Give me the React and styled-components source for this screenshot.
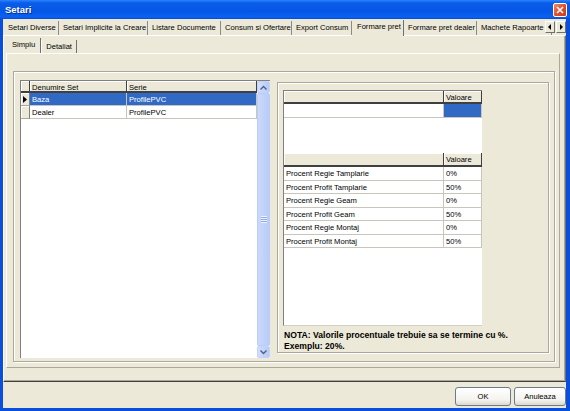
import React from 'react';
import styled, { createGlobalStyle } from 'styled-components';

const Global = createGlobalStyle`
  html, body { margin: 0; padding: 0; background: #0a4fdc; }
  * { box-sizing: border-box; }
`;

const Window = styled.div`
  width: 570px;
  height: 411px;
  display: flex;
  flex-direction: column;
  background: #0a4fdc;
  font-family: "Liberation Sans", Arial, sans-serif;
  font-size: 7.6px;
  color: #000;
  overflow: hidden;
`;

const TitleBar = styled.div`
  height: 19px;
  display: flex;
  align-items: center;
  justify-content: space-between;
  padding: 0 3px 0 5px;
  background: linear-gradient(to bottom, #2a84ff 0%, #0a5de8 15%, #0656e6 60%, #0a62f2 90%, #0848d6 100%);
`;

const Title = styled.span`
  color: #fff;
  font-weight: bold;
  font-size: 9.5px;
  text-shadow: 1px 1px 0 #0a2f8a;
`;

const CloseBtn = styled.div`
  width: 14px;
  height: 14px;
  border: 1px solid #fff;
  border-radius: 2px;
  background: linear-gradient(135deg, #f08a6a 0%, #e0502b 50%, #c83a18 100%);
  display: flex;
  align-items: center;
  justify-content: center;
`;

const Frame = styled.div`
  flex: 1;
  margin: 0 4px 3px 3px;
  background: #ece9d8;
  display: flex;
  flex-direction: column;
`;

const TabStrip = styled.div`
  height: 16px;
  display: flex;
  align-items: flex-end;
  padding-left: 1px;
  position: relative;
`;

const Tab = styled.div`
  width: ${p => p.$w}px;
  flex: none;
  height: ${p => (p.$active ? 16 : 14)}px;
  padding: ${p => (p.$active ? '2px 0 0 5px' : '2px 0 0 4px')};
  border-right: 1px solid ${p => (p.$active ? '#6f6f6f' : '#8a8a8a')};
  white-space: nowrap;
  overflow: hidden;
  background: #ece9d8;
  position: relative;
  z-index: ${p => (p.$active ? 2 : 1)};
  margin-bottom: ${p => (p.$active ? '-1px' : '0')};
`;

const TabScroll = styled.div`
  position: absolute;
  right: 0;
  top: 2px;
  display: flex;
  gap: 1px;
  z-index: 3;
`;

const ScrollArrow = styled.div`
  width: 10px;
  height: 12px;
  background: #ece9d8;
  border: 1px solid;
  border-color: #fff #6f6f6f #6f6f6f #fff;
  display: flex;
  align-items: center;
  justify-content: center;
`;

const TabPage = styled.div`
  height: 347px;
  border-top: 1px solid #fff;
  border-left: 1px solid #fff;
  border-right: 1px solid #6f6f6f;
  border-bottom: 1px solid #404040;
  box-shadow: inset -1px -1px 0 #aca899;
  padding: 1px 5px 0 2px;
  display: flex;
  flex-direction: column;
`;

const SubStrip = styled.div`
  height: 16px;
  display: flex;
  align-items: flex-end;
  padding-left: 3px;
`;

const SubTab = styled.div`
  height: ${p => (p.$active ? 15 : 13)}px;
  padding: ${p => (p.$active ? '2px 5px 0 3px' : '2px 4px 0 4px')};
  border-right: 1px solid #6f6f6f;
  border-left: ${p => (p.$active ? 'none' : '1px solid #fff')};
  white-space: nowrap;
`;

const SubPage = styled.div`
  height: 315px;
  border-top: 1px solid #fff;
  border-left: 1px solid #fff;
  border-right: 1px solid #aca899;
  border-bottom: 1px solid #aca899;
  padding: 17px 3px 0 6px;
`;

const Panel = styled.div`
  width: 542px;
  height: 291px;
  border: 1px solid #aca899;
  box-shadow: inset 1px 1px 0 #fff, 1px 1px 0 #fff;
  padding: 8px 5px 0 6px;
  display: flex;
  gap: 7px;
  align-items: flex-start;
`;

const ListGrid = styled.div`
  width: 250px;
  height: 278px;
  background: #fff;
  border-top: 1px solid #808080;
  border-left: 1px solid #808080;
  display: flex;
`;

const ListBody = styled.div`
  flex: 1;
  display: flex;
  flex-direction: column;
`;

const Row = styled.div`
  display: flex;
  height: ${p => p.$h || 13}px;
`;

const HeadCell = styled.div`
  width: ${p => p.$w}px;
  flex: none;
  background: #ece9d8;
  border-right: 1px solid #404040;
  border-bottom: 2px solid #404040;
  box-shadow: inset 1px 1px 0 #fff;
  padding: 2px 0 0 2px;
  white-space: nowrap;
`;

const Indicator = styled.div`
  width: 9px;
  flex: none;
  background: #ece9d8;
  border-right: 1px solid #808080;
  border-bottom: 1px solid #aca899;
  box-shadow: inset 1px 1px 0 #fff;
  display: flex;
  align-items: center;
  justify-content: center;
`;

const Cell = styled.div`
  width: ${p => p.$w}px;
  flex: none;
  background: ${p => (p.$sel ? '#316ac5' : '#fff')};
  color: ${p => (p.$sel ? '#fff' : '#000')};
  border-right: 1px solid #c8c6bc;
  border-bottom: 1px solid #c8c6bc;
  padding: 2px 0 0 2px;
  white-space: nowrap;
`;

const ScrollBar = styled.div`
  width: 13px;
  margin-left: auto;
  display: flex;
  flex-direction: column;
  background: #f4f3ee;
`;

const ScrollBtn = styled.div`
  height: 12px;
  border: 1px solid #c3d3fd;
  border-radius: 2px;
  background: linear-gradient(to right, #d2defc, #b6caf7);
  display: flex;
  align-items: center;
  justify-content: center;
`;

const Thumb = styled.div`
  flex: 1;
  border: 1px solid #bacdf8;
  border-radius: 2px;
  background: linear-gradient(to right, #cad9fc, #b9ccf8);
  display: flex;
  align-items: center;
  justify-content: center;
`;

const Grip = styled.div`
  width: 6px;
  height: 7px;
  background: repeating-linear-gradient(to bottom, #eef3fe 0 1px, #8caae6 1px 2px);
`;

const GroupBox = styled.div`
  width: 273px;
  height: 271px;
  margin-top: 2px;
  border: 1px solid #aca899;
  box-shadow: inset 1px 1px 0 #fff, 1px 1px 0 #fff;
  padding: 7px 0 0 5px;
  display: flex;
  flex-direction: column;
`;

const ValueArea = styled.div`
  width: 199px;
  height: 237px;
  background: #fff;
  border-left: 1px solid #808080;
  border-top: 1px solid #808080;
  border-bottom: 1px solid #d4d0c8;
  display: flex;
  flex-direction: column;
`;

const Spacer = styled.div`
  height: ${p => p.$h}px;
  flex: none;
`;

const Note = styled.div`
  margin-top: 4px;
  font-weight: bold;
  line-height: 11px;
  font-size: 8.6px;
  padding-left: 1px;
  white-space: nowrap;
`;

const Footer = styled.div`
  flex: 1;
  display: flex;
  justify-content: flex-end;
  align-items: flex-start;
  padding-top: 5px;
  gap: 3px;
`;

const Button = styled.div`
  width: ${p => p.$w}px;
  height: 19px;
  border: 1px solid #6a7a8f;
  border-radius: 3px;
  background: linear-gradient(to bottom, #ffffff 0%, #f4f3ee 70%, #dcd9cc 100%);
  display: flex;
  align-items: center;
  justify-content: center;
`;

const tabs = [
  ['Setari Diverse', 55],
  ['Setari Implicite la Creare', 89],
  ['Listare Documente', 73],
  ['Consum si Ofertare', 71],
  ['Export Consum', 60],
  ['Formare pret', 52, true],
  ['Formare pret dealer', 73],
  ['Machete Rapoarte', 75],
];

const procente = [
  ['Procent Regie Tamplarie', '0%'],
  ['Procent Profit Tamplarie', '50%'],
  ['Procent Regie Geam', '0%'],
  ['Procent Profit Geam', '50%'],
  ['Procent Regie Montaj', '0%'],
  ['Procent Profit Montaj', '50%'],
];

const Arrow = ({ dir }) => (
  <svg width="7" height="5" viewBox="0 0 7 5">
    <path d={dir === 'up' ? 'M0.5 4.5 L3.5 1.5 L6.5 4.5' : 'M0.5 0.5 L3.5 3.5 L6.5 0.5'} fill="none" stroke="#4d6185" strokeWidth="1.4" />
  </svg>
);

export default function App() {
  return (
    <Window>
      <Global />
      <TitleBar>
        <Title>Setari</Title>
        <CloseBtn>
          <svg width="8" height="8" viewBox="0 0 8 8">
            <path d="M1 1 L7 7 M7 1 L1 7" stroke="#fff" strokeWidth="1.6" />
          </svg>
        </CloseBtn>
      </TitleBar>
      <Frame>
        <TabStrip>
          {tabs.map(([label, w, active]) => (
            <Tab key={label} $w={w} $active={active}>{label}</Tab>
          ))}
          <TabScroll>
            <ScrollArrow>
              <svg width="4" height="6" viewBox="0 0 4 6"><path d="M3 0 L0 3 L3 6 Z" fill="#000" /></svg>
            </ScrollArrow>
            <ScrollArrow>
              <svg width="4" height="6" viewBox="0 0 4 6"><path d="M1 0 L4 3 L1 6 Z" fill="#000" /></svg>
            </ScrollArrow>
          </TabScroll>
        </TabStrip>
        <TabPage>
          <SubStrip>
            <SubTab $active>Simplu</SubTab>
            <SubTab>Detaliat</SubTab>
          </SubStrip>
          <SubPage>
            <Panel>
              <ListGrid>
                <ListBody>
                  <Row $h={12}>
                    <HeadCell $w={9} />
                    <HeadCell $w={97}>Denumire Set</HeadCell>
                    <HeadCell $w={130}>Serie</HeadCell>
                  </Row>
                  <Row>
                    <Indicator>
                      <svg width="4" height="7" viewBox="0 0 4 7"><path d="M0 0 L4 3.5 L0 7 Z" fill="#000" /></svg>
                    </Indicator>
                    <Cell $w={97} $sel>Baza</Cell>
                    <Cell $w={130} $sel>ProfilePVC</Cell>
                  </Row>
                  <Row>
                    <Indicator />
                    <Cell $w={97}>Dealer</Cell>
                    <Cell $w={130}>ProfilePVC</Cell>
                  </Row>
                </ListBody>
                <ScrollBar>
                  <ScrollBtn><Arrow dir="up" /></ScrollBtn>
                  <Thumb><Grip /></Thumb>
                  <ScrollBtn><Arrow dir="down" /></ScrollBtn>
                </ScrollBar>
              </ListGrid>
              <GroupBox>
                <ValueArea>
                  <Row $h={13}>
                    <HeadCell $w={160} />
                    <HeadCell $w={38}>Valoare</HeadCell>
                  </Row>
                  <Row $h={14}>
                    <Cell $w={160} />
                    <Cell $w={38} $sel />
                  </Row>
                  <Spacer $h={35} />
                  <Row $h={14}>
                    <HeadCell $w={160} />
                    <HeadCell $w={38}>Valoare</HeadCell>
                  </Row>
                  {procente.map(([name, val]) => (
                    <Row key={name} $h={13.5}>
                      <Cell $w={160}>{name}</Cell>
                      <Cell $w={38}>{val}</Cell>
                    </Row>
                  ))}
                </ValueArea>
                <Note>
                  NOTA: Valorile procentuale trebuie sa se termine cu %.<br />
                  Exemplu: 20%.
                </Note>
              </GroupBox>
            </Panel>
          </SubPage>
        </TabPage>
        <Footer>
          <Button $w={56}>OK</Button>
          <Button $w={52}>Anuleaza</Button>
        </Footer>
      </Frame>
    </Window>
  );
}
